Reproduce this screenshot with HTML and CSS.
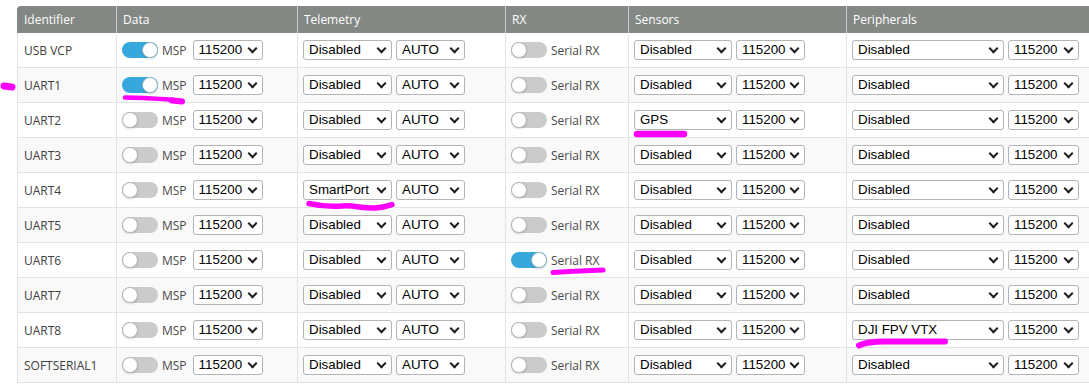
FILE: index.html
```html
<!DOCTYPE html>
<html>
<head>
<meta charset="utf-8">
<title>Ports</title>
<link rel="stylesheet" href="styles.css">
</head>
<body>
<div class="page">
<table class="ports">
  <colgroup>
    <col class="c-id"><col class="c-data"><col class="c-tel"><col class="c-rx"><col class="c-sen"><col class="c-per">
  </colgroup>
  <thead>
    <tr><th>Identifier</th><th>Data</th><th>Telemetry</th><th>RX</th><th>Sensors</th><th>Peripherals</th></tr>
  </thead>
  <tbody>
    <tr>
      <td>USB VCP</td>
      <td><div class="cell"><span class="switch on"><span class="knob"></span></span><span class="lbl">MSP</span><span class="sel msp"><select class="w70"><option>115200</option></select></span></div></td>
      <td><div class="cell"><span class="sel"><select class="w89"><option>Disabled</option></select></span><span class="sel"><select class="w69"><option>AUTO</option></select></span></div></td>
      <td><div class="cell"><span class="switch"><span class="knob"></span></span><span class="lbl">Serial RX</span></div></td>
      <td><div class="cell"><span class="sel"><select class="w98"><option>Disabled</option></select></span><span class="sel"><select class="w69"><option>115200</option></select></span></div></td>
      <td><div class="cell"><span class="sel"><select class="w152"><option>Disabled</option></select></span><span class="sel"><select class="w71"><option>115200</option></select></span></div></td>
    </tr>
    <tr>
      <td>UART1</td>
      <td><div class="cell"><span class="switch on"><span class="knob"></span></span><span class="lbl">MSP</span><span class="sel msp"><select class="w70"><option>115200</option></select></span></div></td>
      <td><div class="cell"><span class="sel"><select class="w89"><option>Disabled</option></select></span><span class="sel"><select class="w69"><option>AUTO</option></select></span></div></td>
      <td><div class="cell"><span class="switch"><span class="knob"></span></span><span class="lbl">Serial RX</span></div></td>
      <td><div class="cell"><span class="sel"><select class="w98"><option>Disabled</option></select></span><span class="sel"><select class="w69"><option>115200</option></select></span></div></td>
      <td><div class="cell"><span class="sel"><select class="w152"><option>Disabled</option></select></span><span class="sel"><select class="w71"><option>115200</option></select></span></div></td>
    </tr>
    <tr>
      <td>UART2</td>
      <td><div class="cell"><span class="switch"><span class="knob"></span></span><span class="lbl">MSP</span><span class="sel msp"><select class="w70"><option>115200</option></select></span></div></td>
      <td><div class="cell"><span class="sel"><select class="w89"><option>Disabled</option></select></span><span class="sel"><select class="w69"><option>AUTO</option></select></span></div></td>
      <td><div class="cell"><span class="switch"><span class="knob"></span></span><span class="lbl">Serial RX</span></div></td>
      <td><div class="cell"><span class="sel"><select class="w98"><option>GPS</option></select></span><span class="sel"><select class="w69"><option>115200</option></select></span></div></td>
      <td><div class="cell"><span class="sel"><select class="w152"><option>Disabled</option></select></span><span class="sel"><select class="w71"><option>115200</option></select></span></div></td>
    </tr>
    <tr>
      <td>UART3</td>
      <td><div class="cell"><span class="switch"><span class="knob"></span></span><span class="lbl">MSP</span><span class="sel msp"><select class="w70"><option>115200</option></select></span></div></td>
      <td><div class="cell"><span class="sel"><select class="w89"><option>Disabled</option></select></span><span class="sel"><select class="w69"><option>AUTO</option></select></span></div></td>
      <td><div class="cell"><span class="switch"><span class="knob"></span></span><span class="lbl">Serial RX</span></div></td>
      <td><div class="cell"><span class="sel"><select class="w98"><option>Disabled</option></select></span><span class="sel"><select class="w69"><option>115200</option></select></span></div></td>
      <td><div class="cell"><span class="sel"><select class="w152"><option>Disabled</option></select></span><span class="sel"><select class="w71"><option>115200</option></select></span></div></td>
    </tr>
    <tr>
      <td>UART4</td>
      <td><div class="cell"><span class="switch"><span class="knob"></span></span><span class="lbl">MSP</span><span class="sel msp"><select class="w70"><option>115200</option></select></span></div></td>
      <td><div class="cell"><span class="sel"><select class="w89"><option>SmartPort</option></select></span><span class="sel"><select class="w69"><option>AUTO</option></select></span></div></td>
      <td><div class="cell"><span class="switch"><span class="knob"></span></span><span class="lbl">Serial RX</span></div></td>
      <td><div class="cell"><span class="sel"><select class="w98"><option>Disabled</option></select></span><span class="sel"><select class="w69"><option>115200</option></select></span></div></td>
      <td><div class="cell"><span class="sel"><select class="w152"><option>Disabled</option></select></span><span class="sel"><select class="w71"><option>115200</option></select></span></div></td>
    </tr>
    <tr>
      <td>UART5</td>
      <td><div class="cell"><span class="switch"><span class="knob"></span></span><span class="lbl">MSP</span><span class="sel msp"><select class="w70"><option>115200</option></select></span></div></td>
      <td><div class="cell"><span class="sel"><select class="w89"><option>Disabled</option></select></span><span class="sel"><select class="w69"><option>AUTO</option></select></span></div></td>
      <td><div class="cell"><span class="switch"><span class="knob"></span></span><span class="lbl">Serial RX</span></div></td>
      <td><div class="cell"><span class="sel"><select class="w98"><option>Disabled</option></select></span><span class="sel"><select class="w69"><option>115200</option></select></span></div></td>
      <td><div class="cell"><span class="sel"><select class="w152"><option>Disabled</option></select></span><span class="sel"><select class="w71"><option>115200</option></select></span></div></td>
    </tr>
    <tr>
      <td>UART6</td>
      <td><div class="cell"><span class="switch"><span class="knob"></span></span><span class="lbl">MSP</span><span class="sel msp"><select class="w70"><option>115200</option></select></span></div></td>
      <td><div class="cell"><span class="sel"><select class="w89"><option>Disabled</option></select></span><span class="sel"><select class="w69"><option>AUTO</option></select></span></div></td>
      <td><div class="cell"><span class="switch on"><span class="knob"></span></span><span class="lbl">Serial RX</span></div></td>
      <td><div class="cell"><span class="sel"><select class="w98"><option>Disabled</option></select></span><span class="sel"><select class="w69"><option>115200</option></select></span></div></td>
      <td><div class="cell"><span class="sel"><select class="w152"><option>Disabled</option></select></span><span class="sel"><select class="w71"><option>115200</option></select></span></div></td>
    </tr>
    <tr>
      <td>UART7</td>
      <td><div class="cell"><span class="switch"><span class="knob"></span></span><span class="lbl">MSP</span><span class="sel msp"><select class="w70"><option>115200</option></select></span></div></td>
      <td><div class="cell"><span class="sel"><select class="w89"><option>Disabled</option></select></span><span class="sel"><select class="w69"><option>AUTO</option></select></span></div></td>
      <td><div class="cell"><span class="switch"><span class="knob"></span></span><span class="lbl">Serial RX</span></div></td>
      <td><div class="cell"><span class="sel"><select class="w98"><option>Disabled</option></select></span><span class="sel"><select class="w69"><option>115200</option></select></span></div></td>
      <td><div class="cell"><span class="sel"><select class="w152"><option>Disabled</option></select></span><span class="sel"><select class="w71"><option>115200</option></select></span></div></td>
    </tr>
    <tr>
      <td>UART8</td>
      <td><div class="cell"><span class="switch"><span class="knob"></span></span><span class="lbl">MSP</span><span class="sel msp"><select class="w70"><option>115200</option></select></span></div></td>
      <td><div class="cell"><span class="sel"><select class="w89"><option>Disabled</option></select></span><span class="sel"><select class="w69"><option>AUTO</option></select></span></div></td>
      <td><div class="cell"><span class="switch"><span class="knob"></span></span><span class="lbl">Serial RX</span></div></td>
      <td><div class="cell"><span class="sel"><select class="w98"><option>Disabled</option></select></span><span class="sel"><select class="w69"><option>115200</option></select></span></div></td>
      <td><div class="cell"><span class="sel"><select class="w152"><option>DJI FPV VTX</option></select></span><span class="sel"><select class="w71"><option>115200</option></select></span></div></td>
    </tr>
    <tr>
      <td>SOFTSERIAL1</td>
      <td><div class="cell"><span class="switch"><span class="knob"></span></span><span class="lbl">MSP</span><span class="sel msp"><select class="w70"><option>115200</option></select></span></div></td>
      <td><div class="cell"><span class="sel"><select class="w89"><option>Disabled</option></select></span><span class="sel"><select class="w69"><option>AUTO</option></select></span></div></td>
      <td><div class="cell"><span class="switch"><span class="knob"></span></span><span class="lbl">Serial RX</span></div></td>
      <td><div class="cell"><span class="sel"><select class="w98"><option>Disabled</option></select></span><span class="sel"><select class="w69"><option>115200</option></select></span></div></td>
      <td><div class="cell"><span class="sel"><select class="w152"><option>Disabled</option></select></span><span class="sel"><select class="w71"><option>115200</option></select></span></div></td>
    </tr>
  </tbody>
</table>

<svg class="marks" width="1089" height="384" viewBox="0 0 1089 384" aria-hidden="true">
  <g fill="none" stroke="#ff00ff" stroke-linecap="round" stroke-linejoin="round">
    <path d="M4 86 L12 87" stroke-width="7"/>
    <path d="M125 97.5 C145 98 165 98.5 182 101" stroke-width="4.5"/>
    <path d="M172 100.5 L182 101.5" stroke-width="6"/>
    <path d="M637 134 L684 134" stroke-width="6.5"/>
    <path d="M309 203.5 C320 206 330 207 342 206 C355 205 362 208.5 375 208 C384 207.5 389 205.5 392 204.5" stroke-width="5.5"/>
    <path d="M553 272.5 C570 271.5 590 270.5 603 270" stroke-width="5"/>
    <path d="M859 345.5 C866 342 874 341.5 884 341.5 L945 341.5" stroke-width="6"/>
  </g>
</svg>
</div>
</body>
</html>
```

FILE: styles.css
```css
html, body {
  margin: 0;
  padding: 0;
  background: #fff;
  overflow: hidden;
}

.page {
  position: relative;
  width: 1089px;
  height: 384px;
  padding: 6px 0 0 17px;
  box-sizing: border-box;
  font-family: "Open Sans", "Liberation Sans", sans-serif;
  font-size: 12px;
  color: #404040;
}

.ports {
  border-collapse: separate;
  border-spacing: 0;
  table-layout: fixed;
  width: 1100px;
}

.c-id { width: 99px; }
.c-data { width: 181px; }
.c-tel { width: 208px; }
.c-rx { width: 123px; }
.c-sen { width: 218px; }
.c-per { width: 271px; }

.ports th {
  height: 27px;
  padding: 0 0 0 6px;
  background: #838885;
  color: #fff;
  font-weight: normal;
  text-align: left;
  border-left: 1px solid #c9cbca;
  white-space: nowrap;
}

.ports th:first-child {
  border-left-color: #838885;
  border-top-left-radius: 4px;
}

.ports td {
  height: 34px;
  padding: 0 0 0 5px;
  border-left: 1px solid #e3e3e3;
  border-bottom: 1px solid #e3e3e3;
  vertical-align: middle;
  white-space: nowrap;
}

.ports td:first-child {
  padding-left: 6px;
}

.ports tbody tr:nth-child(even) td {
  background: #f9f9f9;
}

.cell {
  display: flex;
  align-items: center;
}

.switch {
  display: flex;
  justify-content: flex-start;
  width: 36px;
  height: 16px;
  border-radius: 8px;
  background: #cbcbcb;
  flex: none;
}

.switch.on {
  justify-content: flex-end;
  background: #37a8db;
}

.knob {
  width: 16px;
  height: 16px;
  box-sizing: border-box;
  border-radius: 50%;
  background: #fff;
  border: 1px solid #b8b8b8;
  box-shadow: 0 1px 2px rgba(0, 0, 0, 0.15);
}

.switch.on .knob {
  border-color: #9fb9c6;
}

.lbl {
  margin-left: 4px;
  color: #4a4a4a;
}

.sel {
  position: relative;
  display: flex;
  margin-right: 4px;
}

.sel.msp {
  margin-left: 6px;
}

.sel::after {
  content: "";
  position: absolute;
  right: 7px;
  top: 5px;
  width: 5px;
  height: 5px;
  border-right: 2px solid #1e1e1e;
  border-bottom: 2px solid #1e1e1e;
  transform: rotate(45deg);
  pointer-events: none;
}

select {
  -webkit-appearance: none;
  appearance: none;
  box-sizing: border-box;
  height: 20px;
  margin: 0;
  padding: 0 0 0 5px;
  border: 1px solid #b4b4b4;
  border-radius: 3px;
  background: #fff;
  color: #000;
  font-family: "Liberation Sans", Arial, sans-serif;
  font-size: 13.33px;
  line-height: 18px;
}

.w69 { width: 69px; }
.w70 { width: 70px; }
.w71 { width: 71px; }
.w89 { width: 89px; }
.w98 { width: 98px; }
.w152 { width: 152px; }

.marks {
  position: absolute;
  left: 0;
  top: 0;
  pointer-events: none;
}
```
